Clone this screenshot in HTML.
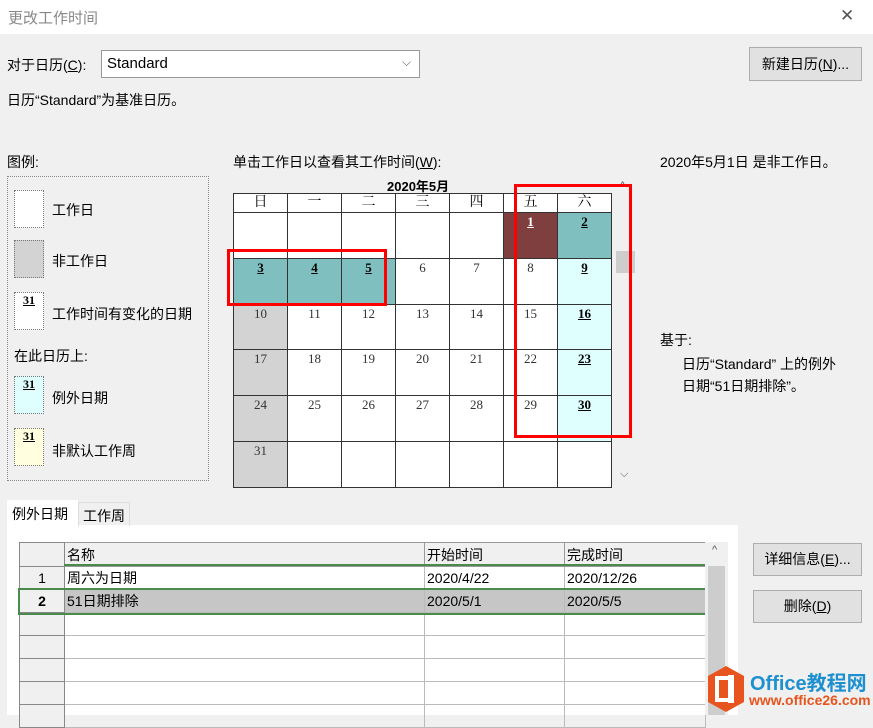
<!DOCTYPE html>
<html><head><meta charset="utf-8"><style>
*{box-sizing:border-box;margin:0;padding:0}
body{width:873px;height:715px;overflow:hidden;background:#f0f0f0;font-family:"Liberation Sans","Noto Sans CJK SC",sans-serif;font-size:14px;color:#000;position:relative}
.a{position:absolute}
.t{font-size:14px;white-space:nowrap}
.btn{position:absolute;background:#e1e1e1;border:1px solid #adadad;text-align:center;font-size:14px}
.cal{position:absolute;left:233px;top:193px;border-collapse:collapse;font-family:"Liberation Serif","Noto Serif CJK SC",serif}
.cal td{border:1px solid #333;width:54px;height:45.8px;vertical-align:top;text-align:center;font-size:13px;color:#333;background:#fff;padding-top:1px}
.cal tr.h td{height:19px;padding:0;font-size:14px;line-height:17px;color:#000;background:#fff}
.cal td.g{background:#d3d3d3}
.cal td.x{background:#7fbfbf;font-weight:bold;text-decoration:underline;color:#000}
.cal td.c{background:#dfffff;font-weight:bold;text-decoration:underline;color:#000}
.cal td.r{background:#7f3f3f;color:#fff;font-weight:bold;text-decoration:underline}
.red{position:absolute;border:3px solid #f00}
.sw{position:absolute;left:14px;width:30px;height:38px;border:1px dotted #777;font-family:"Liberation Serif",serif;font-weight:bold;font-size:12px;text-align:center;text-decoration:underline}
.lg{position:absolute;left:52px;font-size:14px}
.tb{position:absolute;left:19px;top:542px;border-collapse:collapse;font-size:14px}
.tb td{border:1px solid #bbb;height:23px;padding:0 2px;white-space:nowrap}
.tb td.n{background:#f0f0f0;text-align:center;width:45px;border:1px solid #888}
</style></head><body>
<div class="a" style="left:0;top:0;width:873px;height:34px;background:#fff"></div>
<div class="a t" style="left:8px;top:7px;color:#888;font-size:15px">更改工作时间</div>
<div class="a" style="left:840px;top:6px;font-size:17px;color:#555">✕</div>

<div class="a t" style="left:7px;top:55px">对于日历(<u>C</u>):</div>
<div class="a" style="left:101px;top:50px;width:319px;height:28px;background:#fff;border:1px solid #999"></div>
<div class="a t" style="left:107px;top:55px;font-size:15px">Standard</div>
<div class="a" style="left:402px;top:55px;color:#666;font-size:12px">⌵</div>
<div class="btn" style="left:749px;top:47px;width:113px;height:34px;line-height:32px">新建日历(<u>N</u>)...</div>
<div class="a t" style="left:7px;top:90px">日历“Standard”为基准日历。</div>

<div class="a t" style="left:7px;top:152px">图例:</div>
<div class="a" style="left:7px;top:176px;width:202px;height:305px;border:1px dotted #888"></div>
<div class="sw" style="top:190px;background:#fff"></div><div class="lg" style="top:200px">工作日</div>
<div class="sw" style="top:240px;background:#d3d3d3"></div><div class="lg" style="top:251px">非工作日</div>
<div class="sw" style="top:292px;background:#fff">31</div><div class="lg" style="top:304px">工作时间有变化的日期</div>
<div class="a t" style="left:14px;top:346px">在此日历上:</div>
<div class="sw" style="top:376px;background:#dfffff">31</div><div class="lg" style="top:388px">例外日期</div>
<div class="sw" style="top:428px;background:#ffffdf">31</div><div class="lg" style="top:441px">非默认工作周</div>

<div class="a t" style="left:233px;top:152px">单击工作日以查看其工作时间(<u>W</u>):</div>
<div class="a" style="left:387px;top:176px;font-size:13px;font-weight:bold">2020年5月</div>
<table class="cal">
<tr class="h"><td>日</td><td>一</td><td>二</td><td>三</td><td>四</td><td>五</td><td>六</td></tr>
<tr><td></td><td></td><td></td><td></td><td></td><td class="r">1</td><td class="x">2</td></tr>
<tr><td class="x">3</td><td class="x">4</td><td class="x">5</td><td>6</td><td>7</td><td>8</td><td class="c">9</td></tr>
<tr><td class="g">10</td><td>11</td><td>12</td><td>13</td><td>14</td><td>15</td><td class="c">16</td></tr>
<tr><td class="g">17</td><td>18</td><td>19</td><td>20</td><td>21</td><td>22</td><td class="c">23</td></tr>
<tr><td class="g">24</td><td>25</td><td>26</td><td>27</td><td>28</td><td>29</td><td class="c">30</td></tr>
<tr><td class="g">31</td><td></td><td></td><td></td><td></td><td></td><td></td></tr>
</table>
<div class="a" style="left:616px;top:251px;width:19px;height:22px;background:#cdcdcd"></div>
<div class="a" style="left:620px;top:180px;font-size:11px;color:#555">^</div>
<div class="a" style="left:620px;top:468px;font-size:11px;color:#555">⌵</div>
<div class="red" style="left:227px;top:249px;width:160px;height:57px"></div>
<div class="red" style="left:514px;top:184px;width:118px;height:254px"></div>

<div class="a t" style="left:660px;top:152px">2020年5月1日 是非工作日。</div>
<div class="a t" style="left:660px;top:330px">基于:</div>
<div class="a t" style="left:682px;top:354px">日历“Standard” 上的例外</div>
<div class="a t" style="left:682px;top:376px">日期“51日期排除”。</div>

<div class="a" style="left:7px;top:525px;width:731px;height:190px;background:#fff"></div>
<div class="a" style="left:7px;top:500px;width:71px;height:26px;background:#fff"></div>
<div class="a t" style="left:12px;top:504px">例外日期</div>
<div class="a" style="left:78px;top:502px;width:52px;height:24px;border:1px solid #ddd;border-bottom:none"></div>
<div class="a t" style="left:83px;top:506px">工作周</div>

<table class="tb">
<tr><td class="n" style="height:24px"></td><td style="width:360px;background:#f0f0f0;border-color:#999">名称</td><td style="width:140px;background:#f0f0f0;border-color:#999">开始时间</td><td style="width:141px;background:#f0f0f0;border-color:#999">完成时间</td></tr>
<tr><td class="n">1</td><td>周六为日期</td><td>2020/4/22</td><td>2020/12/26</td></tr>
<tr style="background:#c6c6c6;outline:2px solid #4a8a4a"><td class="n" style="font-weight:bold">2</td><td>51日期排除</td><td>2020/5/1</td><td>2020/5/5</td></tr>
<tr><td class="n"></td><td></td><td></td><td></td></tr>
<tr><td class="n"></td><td></td><td></td><td></td></tr>
<tr><td class="n"></td><td></td><td></td><td></td></tr>
<tr><td class="n"></td><td></td><td></td><td></td></tr>
<tr><td class="n"></td><td></td><td></td><td></td></tr>
</table>
<div class="a" style="left:64px;top:564px;width:641px;height:2px;background:#4a8a4a"></div>
<div class="a" style="left:705px;top:542px;width:23px;height:173px;background:#f0f0f0"></div>
<div class="a" style="left:708px;top:566px;width:17px;height:149px;background:#cdcdcd"></div>
<div class="a" style="left:712px;top:544px;font-size:11px;color:#555">^</div>

<div class="btn" style="left:753px;top:543px;width:109px;height:33px;line-height:31px">详细信息(<u>E</u>)...</div>
<div class="btn" style="left:753px;top:590px;width:109px;height:33px;line-height:31px">删除(<u>D</u>)</div>

<svg class="a" style="left:706px;top:665px" width="40" height="48" viewBox="0 0 40 48"><polygon points="20,1 38,11 38,37 20,47 2,37 2,11" fill="#e8541e"/><rect x="11" y="13" width="13" height="22" fill="none" stroke="#fff" stroke-width="4"/><rect x="22" y="10" width="6" height="28" fill="#fff"/></svg>
<div class="a" style="left:750px;top:667px;font-size:20px;font-weight:bold;color:#1e90d0">Office教程网</div>
<div class="a" style="left:749px;top:692px;font-size:14px;color:#e8541e;font-weight:bold">www.office26.com</div>
</body></html>
